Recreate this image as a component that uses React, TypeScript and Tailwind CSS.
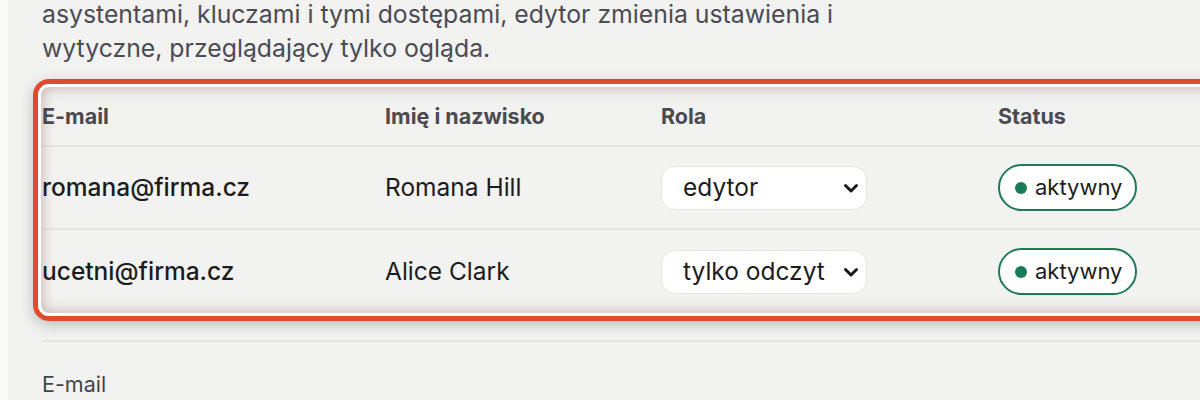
import React from 'react';

const members = [
  { email: 'romana@firma.cz', name: 'Romana Hill', role: 'edytor' },
  { email: 'ucetni@firma.cz', name: 'Alice Clark', role: 'tylko odczyt' },
];

function Chevron() {
  return (
    <svg width="16" height="16" viewBox="0 0 16 16" fill="none" className="shrink-0">
      <path d="M2.5 5.5l5.5 5.5 5.5-5.5" stroke="#1a1a1a" strokeWidth="3" strokeLinecap="round" strokeLinejoin="round" />
    </svg>
  );
}

export default function App() {
  return (
    <div className="min-h-[400px] bg-[#f9f9f8] pl-2 font-['Inter','Noto_Sans',sans-serif]">
      <div className="h-[400px] overflow-hidden bg-[#f2f2f0] pl-[34px]">
        <p className="-mt-[3px] text-[24.8px] leading-[34px] text-[#4b4b55]">
          asystentami, kluczami i tymi dostępami, edytor zmienia ustawienia i
          <br />
          wytyczne, przeglądający tylko ogląda.
        </p>

        {/* members table with highlight */}
        <div className="relative mt-[23px] w-[1250px]">
          <div className="grid h-[59px] grid-cols-[343px_276px_337px_1fr] items-center border-b-2 border-[#e5e5e3] text-[21.5px] font-bold text-[#4a4a52]">
            <div>E-mail</div>
            <div>Imię i nazwisko</div>
            <div>Rola</div>
            <div>Status</div>
          </div>
          {members.map((m, i) => (
            <div
              key={m.email}
              className={`grid h-[83px] grid-cols-[343px_276px_337px_1fr] items-center text-[24.5px] text-[#1c1c1e] ${i === 0 ? 'border-b-2 border-[#e5e5e3]' : ''}`}
            >
              <div className="font-medium">{m.email}</div>
              <div>{m.name}</div>
              <div>
                <div className="flex h-[44px] w-[206px] items-center justify-between rounded-[14px] border border-[#e4e4e2] bg-white pl-[21px] pr-[7px]">
                  <span>{m.role}</span>
                  <Chevron />
                </div>
              </div>
              <div>
                <div className="inline-flex h-[47px] w-[139px] items-center gap-[8px] rounded-full border-2 border-[#1f7a57] bg-white pl-[15px] text-[22px]">
                  <span className="h-[12px] w-[12px] rounded-full bg-[#1a7a55]" />
                  <span>aktywny</span>
                </div>
              </div>
            </div>
          ))}

          {/* highlight overlay */}
          <div className="pointer-events-none absolute -left-[9px] -top-[9px] h-[242px] w-[1300px] rounded-[16px] border-[5px] border-[#e04a2e] shadow-[0_4px_14px_rgba(0,0,0,0.22)]">
            <div className="h-full w-full rounded-[11px] border-[3px] border-white shadow-[inset_0_0_14px_rgba(110,40,30,0.35)]" />
          </div>
        </div>

        <div className="mt-[27px] w-[1200px] border-t-2 border-[#e5e5e3]" />
        <div className="mt-[28px] text-[21.5px] leading-[28px] text-[#45454d]">E-mail</div>
      </div>
    </div>
  );
}
